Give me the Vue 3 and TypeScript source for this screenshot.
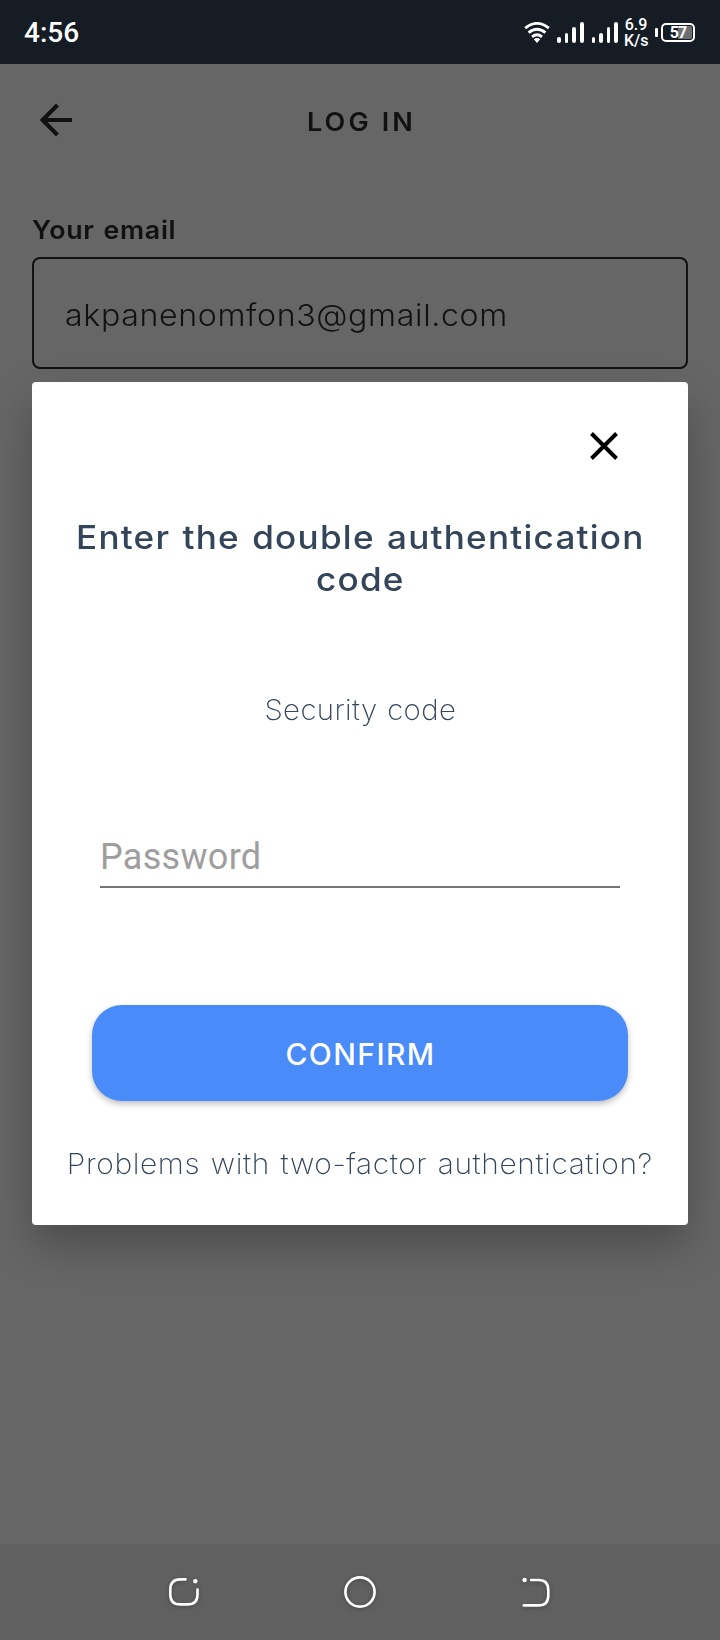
<script setup lang="ts">
import { ref } from 'vue'

const signal: number[] = [6, 10, 16, 21]
const email = ref<string>('akpanenomfon3@gmail.com')
</script>

<template>
  <div class="screen">
    <header class="status">
      <span class="clock">4:56</span>
      <div class="status-right">
        <svg class="wifi" width="26" height="22" viewBox="0 0 26 22" fill="none" stroke="#fff" stroke-width="2.8">
          <path d="M1.2 6.2Q13-3.4 24.8 6.2" />
          <path d="M4.6 10.6Q13 3.8 21.4 10.6" />
          <path d="M8 14.8Q13 10.8 18 14.8" />
          <path d="M9.8 17.2Q13 14.8 16.2 17.2L13 21Z" fill="#fff" stroke="none" />
        </svg>
        <div v-for="n in 2" :key="n" class="bars">
          <i v-for="h in signal" :key="h" :style="{ height: h + 'px' }"></i>
        </div>
        <div class="speed"><span>6.9</span><span>K/s</span></div>
        <div class="battery">
          <i class="nub"></i>
          <div class="cell"><span>57</span></div>
        </div>
      </div>
    </header>

    <main class="page">
      <div class="topbar">
        <svg class="back" width="34" height="34" viewBox="0 0 34 34" fill="none" stroke="#111" stroke-width="4">
          <path d="M18.5 2L3.5 17l15 15M3 17h30" />
        </svg>
        <h1>LOG IN</h1>
      </div>
      <div class="label">Your email</div>
      <div class="field"><span>{{ email }}</span></div>
    </main>

    <nav class="nav">
      <svg width="36" height="36" viewBox="0 0 36 36" fill="none" stroke="#fff" stroke-width="2.6" stroke-linecap="round">
        <path d="M19.500 5.400H14.300Q4.300 5.400 4.300 15.400v5Q4.300 30.400 14.300 30.400h7.200Q31.500 30.400 31.500 20.400V15.500" />
        <circle cx="29.300" cy="7.200" r="2.200" fill="#fff" stroke="none" />
      </svg>
      <svg width="36" height="36" viewBox="0 0 36 36" fill="none" stroke="#fff" stroke-width="2.6">
        <circle cx="18" cy="18" r="14.600" />
      </svg>
      <svg width="36" height="36" viewBox="0 0 36 36" fill="none" stroke="#fff" stroke-width="2.6" stroke-linecap="round">
        <path d="M13.200 6h7.100Q30.300 6 30.300 16v5.400Q30.300 31.400 20.300 31.400H5.800" />
        <circle cx="6.600" cy="6" r="2.200" fill="#fff" stroke="none" />
      </svg>
    </nav>

    <section class="modal" role="dialog">
      <svg class="close" width="28" height="28" viewBox="0 0 28 28" stroke="#000" stroke-width="4">
        <path d="M1.500 1.500l25 25M26.500 1.500l-25 25" />
      </svg>
      <h2>Enter the double authentication<br>code</h2>
      <p class="sub">Security code</p>
      <div class="password">Password</div>
      <button class="confirm">CONFIRM</button>
      <p class="problems">Problems with two-factor authentication?</p>
    </section>
  </div>
</template>

<style>
body { background: #666; }
</style>

<style scoped>
* { box-sizing: border-box; }
.screen {
  position: relative; width: 720px; height: 1640px; overflow: hidden;
  display: flex; flex-direction: column;
  background: #666; color: #111;
  font-family: Inter, "Liberation Sans", sans-serif;
  white-space: nowrap;
}
h1, h2, p { margin: 0; }

.status {
  height: 64px; padding: 0 25px 0 24px;
  display: flex; justify-content: space-between; align-items: center;
  background: #151c24; color: #fff; font-family: Roboto, sans-serif;
}
.clock { font-size: 28px; font-weight: 500; line-height: 64px; padding-top: 2px; }
.status-right { display: flex; align-items: center; height: 64px; }
.wifi { margin: 2px -1px 0 0; }
.bars { display: flex; align-items: flex-end; gap: 4px; height: 21px; margin: 1px 0 0 8px; }
.bars i { width: 3.600px; border-radius: 2px; background: #fff; }
.speed {
  display: flex; flex-direction: column; margin: 2px 0 0 6px; width: 24px;
  font-size: 16px; line-height: 16px; font-weight: 500; text-align: center;
}
.battery { display: flex; align-items: center; margin-left: 7px; gap: 3px; }
.nub { width: 3px; height: 9px; border-radius: 1px; background: #fff; }
.cell {
  width: 34px; height: 19px; padding: 1px; border: 2px solid #fff; border-radius: 5px;
  display: flex; justify-content: center; align-items: center;
  font-size: 16px; font-weight: 700; letter-spacing: -1px;
  background: linear-gradient(90deg, transparent 50%, #6b6e72 50%) content-box;
}

.page { flex: 1; padding: 0 32px; }
.topbar { position: relative; display: flex; align-items: center; justify-content: center; height: 116px; }
.back { position: absolute; left: 7px; top: 39px; }
h1 { padding-left: 3px; font-size: 25.500px; font-weight: 600; letter-spacing: 2.900px; line-height: 30px; transform: scaleX(1.06); }
.label {
  height: 77px; padding-top: 34px; font-size: 25.500px; line-height: 32px; font-weight: 600;
  letter-spacing: .650px; word-spacing: 1.500px; transform: scaleX(1.05); transform-origin: left;
}
.field {
  height: 112px; padding-left: 31px; border: 2px solid #111; border-radius: 8px;
  font-size: 30px; font-weight: 320; line-height: 112px; letter-spacing: .600px;
}
.field span { display: inline-block; transform: scaleX(1.07); transform-origin: left; }

.nav { height: 96px; padding: 0 166px; display: flex; justify-content: space-between; align-items: center; background: #606060; }
.nav svg { filter: drop-shadow(0 1px 2px rgba(0, 0, 0, .3)); }

.modal {
  position: absolute; left: 32px; top: 382px; width: 656px; height: 843px;
  display: flex; flex-direction: column; align-items: center;
  border-radius: 4px; background: #fff; color: #34455a; text-align: center;
  box-shadow: 0 20px 44px rgba(0, 0, 0, .26);
}
.close { align-self: flex-end; margin: 50px 70px 0 0; flex: none; }
h2 {
  margin: 57px 0 1px; padding-left: 1px; font-size: 32.500px; line-height: 42px; font-weight: 460;
  letter-spacing: 1.150px; word-spacing: 1.500px; transform: scaleX(1.08);
}
.sub { margin-top: 88px; font-size: 28px; line-height: 40px; font-weight: 250; letter-spacing: .350px; word-spacing: 1px; transform: scaleX(1.05); }
.password {
  width: 520px; height: 60px; margin-top: 98px; padding-top: 8px; border-bottom: 2px solid #757575;
  text-align: left; color: #9e9e9e; font: 400 36px/42px Roboto, sans-serif; letter-spacing: .300px;
}
.confirm {
  margin-top: 117px; width: 536px; height: 96px; flex: none; padding: 2px 0 0 1px; border: 0; border-radius: 30px;
  background: #488bf9; color: #fff; font: 500 30px Inter, sans-serif; letter-spacing: 1.400px;
  box-shadow: 0 3px 6px rgba(0, 0, 0, .25);
}
.problems { margin-top: 43px; font-size: 28px; line-height: 40px; font-weight: 250; letter-spacing: .550px; word-spacing: 1.500px; transform: scaleX(1.07); }
</style>
